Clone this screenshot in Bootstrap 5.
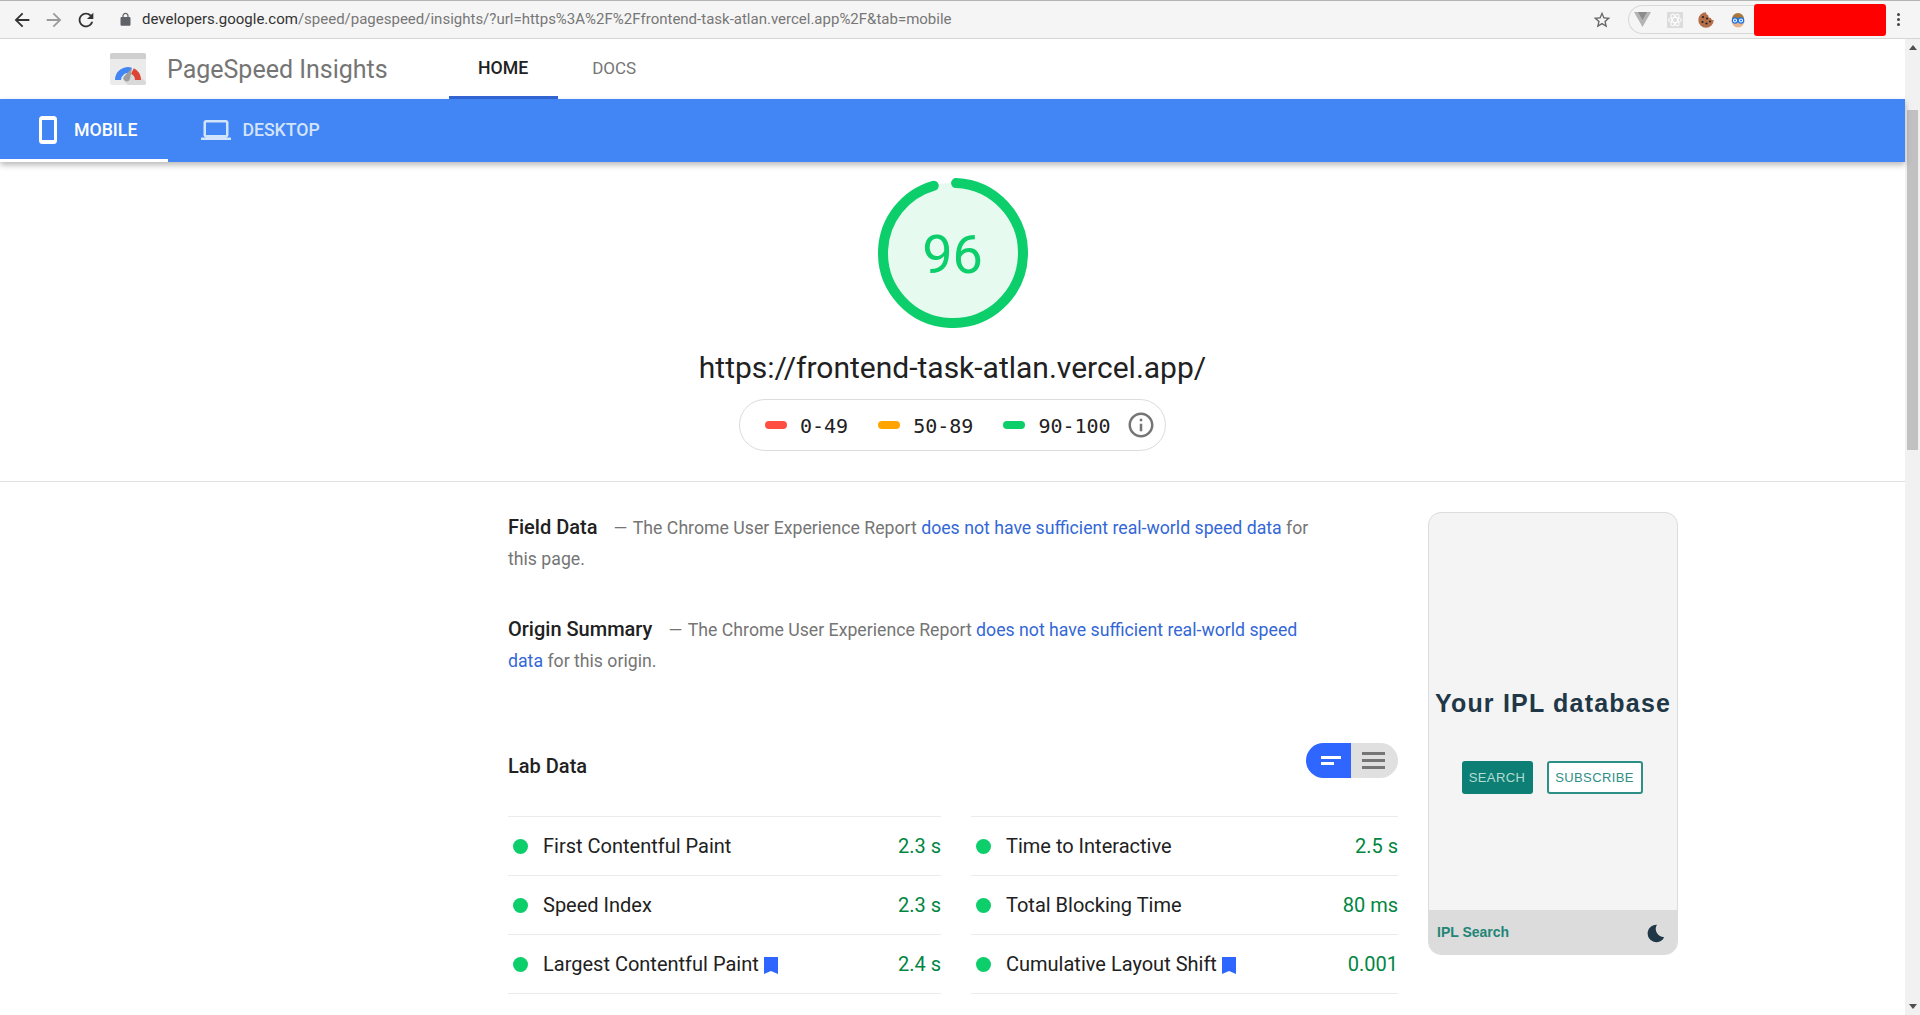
<!DOCTYPE html>
<html lang="en">
<head>
    <meta charset="UTF-8">
    <meta name="viewport" content="width=device-width, initial-scale=1.0">
    <title>PageSpeed Insights</title>
    <link href="https://cdn.jsdelivr.net/npm/bootstrap@5.3.1/dist/css/bootstrap.min.css" rel="stylesheet">
    <style>
        body { font-family: Roboto, "Liberation Sans", sans-serif; color: #212121; background: #fff; }

        /* browser toolbar */
        .tool-bar { height: 39px; background: #f5f5f5; border-top: 1px solid #b4b4b4; border-bottom: 1px solid #d6d6d6; padding-left: 11px; }
        .tool-btn { margin-right: 10px; }
        .url-lock { margin-left: 21px; margin-right: 9px; }
        .url-text { font-size: 15px; color: #777; }
        .url-text b { font-weight: 400; color: #333; }
        .ext-pill { height: 29px; width: 126px; margin-left: 16px; border: 1px solid #d8d8d8; border-right: 0; border-radius: 15px 0 0 15px; }
        .ext-slot { width: 32px; display: flex; justify-content: center; }
        .ext-slot:first-child { margin-left: -2px; }
        .red-box { width: 132px; height: 32px; background: #f00; border-radius: 3px; }
        .kebab { width: 24px; margin-right: 10px; }
        .kebab i { display: block; width: 3px; height: 3px; border-radius: 50%; background: #444; margin: 2px auto; }

        /* scrollbar */
        .fake-scroll { width: 15px; background: #f1f1f1; flex: none; }
        .scroll-thumb { height: 340px; margin: 60px 2px 0; background: #c1c1c1; }
        .arrow-up { border: 4px solid transparent; border-top: 0; border-bottom: 5px solid #505050; width: 0; margin: 6px auto 0; }
        .arrow-down { border: 4px solid transparent; border-bottom: 0; border-top: 5px solid #505050; width: 0; margin: auto auto 6px; }

        /* site header */
        .site-head { height: 60px; padding-left: 110px; }
        .logo-box { margin-right: 21px; }
        .site-title { font-size: 25px; color: #757575; width: 282px; padding-top: 1px; }
        .site-head .nav-link { height: 60px; padding: 2px 30px 0; display: flex; align-items: center; font-size: 17px; color: #757575; border-bottom: 3px solid transparent; }
        .site-head .nav-link.active { padding: 2px 30px 0 29px; font-size: 17.7px; color: #212121; font-weight: 500; border-bottom-color: #3367d6; }
        .site-head .nav-item + .nav-item { margin-left: 4px; }
        .tab-strip { height: 63px; background: #4285f4; box-shadow: 0 3px 6px rgba(0,0,0,.28); position: relative; }
        .tab-strip .nav-link { height: 63px; display: flex; align-items: center; font-size: 17.7px; font-weight: 500; color: #fff; border-bottom: 3px solid transparent; }
        .tab-strip .nav-link.active { padding: 2px 31px 0 39px; gap: 17px; border-bottom-color: #fff; }
        .tab-strip .nav-link.other { padding: 2px 0 0 33px; gap: 11px; color: #d2e3fc; }

        /* score */
        .score-area { padding-top: 16px; height: 320px; border-bottom: 1px solid #e0e0e0; }
        .gauge-wrap { display: grid; width: 150px; height: 150px; }
        .gauge-wrap > * { grid-area: 1 / 1; }
        .gauge-num { font-size: 54px; color: #0cce6b; line-height: 154px; text-align: center; }
        .page-url { font-size: 30px; line-height: 36px; margin-top: 22px; color: #212121; }
        .legend-pill { height: 52px; width: 427px; margin-top: 13px; border: 1px solid #dadce0; border-radius: 26px; padding-left: 25px; font-family: "DejaVu Sans Mono", monospace; font-size: 20px; color: #212121; }
        .legend-bar { width: 22px; height: 8px; border-radius: 4px; margin-right: 13px; }
        .legend-txt { margin-right: 30px; padding-top: 2px; }
        .legend-last { margin-right: 15px; padding-top: 2px; }

        /* report */
        .report-area { padding-left: 508px; padding-top: 30px; }
        .report-col { width: 890px; }
        .note-txt { width: 815px; font-size: 17.7px; line-height: 31px; color: #757575; margin-bottom: 39px; }
        .note-txt strong { font-size: 20px; font-weight: 500; color: #212121; margin-right: 16px; }
        .note-dash { margin-right: 1.5px; }
        .note-txt a { color: #3367d6; text-decoration: none; }
        .lab-head { height: 35px; margin-top: 66px; margin-bottom: 38px; }
        .lab-title { font-size: 20px; font-weight: 500; padding-top: 8px; }
        .view-toggle { width: 92px; height: 35px; border-radius: 18px; overflow: hidden; }
        .view-a { width: 45px; background: #2f66ff; padding-left: 15px; }
        .view-a i { display: block; height: 3px; background: #fff; margin-bottom: 3px; }
        .view-b { width: 47px; background: #e0e0e0; padding-left: 11px; }
        .view-b i { display: block; height: 3px; width: 23px; background: #757575; margin: 2px 0; }
        .metric-grid { display: grid; grid-template-columns: 433px 427px; column-gap: 30px; }
        .metric-line { height: 59px; padding-left: 5px; border-bottom: 1px solid #ebebeb; font-size: 20px; }
        .metric-line.first-line { height: 60px; border-top: 1px solid #ebebeb; }
        .metric-dot { width: 15px; height: 15px; border-radius: 50%; background: #0cce6b; margin-right: 15px; }
        .metric-val { margin-left: auto; color: #018642; }
        .mark-icon { margin-left: 5px; margin-top: 2px; }

        /* thumbnail */
        .thumb-box { width: 250px; height: 443px; margin-left: 30px; border: 1px solid #dadce0; border-radius: 13px; background: #f3f4f3; overflow: hidden; font-family: "Liberation Sans", Arial, sans-serif; }
        .thumb-hero { padding-top: 165px; height: 397px; }
        .thumb-title { font-size: 25px; font-weight: 700; letter-spacing: 1.2px; color: #1f3747; line-height: 50px; white-space: nowrap; }
        .thumb-btn { height: 33px; font-size: 13px; letter-spacing: .4px; border-radius: 3px; }
        .thumb-row { margin-top: 33px; padding-right: 2px; }
        .thumb-search { width: 71px; background: #0d7f74; color: #b5dcd5; }
        .thumb-sub { width: 96px; margin-left: 14px; border: 2px solid #2d8f85; color: #2d8f85; background: #fff; }
        .thumb-foot { height: 45px; background: #dcdcdc; padding: 0 10px 0 8px; }
        .thumb-name { font-size: 14px; font-weight: 700; color: #218577; }
    </style>
</head>
<body class="overflow-hidden">
    <div class="d-flex flex-column vh-100">
        <div class="tool-bar d-flex align-items-center flex-none">
            <svg class="tool-btn" width="22" height="22" viewBox="0 0 24 24" fill="#333"><path d="M20 11H7.83l5.59-5.59L12 4l-8 8 8 8 1.41-1.41L7.83 13H20v-2z"/></svg>
            <svg class="tool-btn" width="22" height="22" viewBox="0 0 24 24" fill="#9a9a9a"><path d="M12 4l-1.41 1.41L16.17 11H4v2h12.17l-5.58 5.59L12 20l8-8z"/></svg>
            <svg width="22" height="22" viewBox="0 0 24 24" fill="#333"><path d="M17.65 6.35A7.958 7.958 0 0 0 12 4c-4.42 0-7.99 3.58-7.99 8s3.57 8 7.99 8c3.73 0 6.84-2.55 7.73-6h-2.08A5.99 5.99 0 0 1 12 18c-3.31 0-6-2.69-6-6s2.69-6 6-6c1.66 0 3.14.69 4.22 1.78L13 11h7V4l-2.35 2.35z"/></svg>
            <svg class="url-lock" width="15" height="15" viewBox="0 0 24 24" fill="#5f6368"><path d="M18 8h-1V6c0-2.76-2.24-5-5-5S7 3.24 7 6v2H6c-1.1 0-2 .9-2 2v10c0 1.1.9 2 2 2h12c1.1 0 2-.9 2-2V10c0-1.1-.9-2-2-2zM9 6c0-1.66 1.34-3 3-3s3 1.34 3 3v2H9V6z"/></svg>
            <div class="url-text"><b>developers.google.com</b>/speed/pagespeed/insights/?url=https%3A%2F%2Ffrontend-task-atlan.vercel.app%2F&amp;tab=mobile</div>
            <svg class="ms-auto" width="20" height="20" viewBox="0 0 24 24" fill="#666"><path d="M22 9.24l-7.19-.62L12 2 9.19 8.63 2 9.24l5.46 4.73L5.82 21 12 17.27 18.18 21l-1.63-7.03L22 9.24zM12 15.4l-3.76 2.27 1-4.28-3.32-2.88 4.38-.38L12 6.1l1.71 4.04 4.38.38-3.32 2.88 1 4.28L12 15.4z"/></svg>
            <div class="ext-pill d-flex align-items-center">
                <div class="ext-slot"><svg width="17" height="15" viewBox="0 0 17 15"><path d="M0 0h17L8.5 15z" fill="#b4b4b4"/><path d="M4 0h9L8.5 8z" fill="#8c8c8c"/></svg></div>
                <div class="ext-slot"><svg width="16" height="16" viewBox="0 0 16 16"><rect width="16" height="16" fill="#dcdcdc"/><g fill="none" stroke="#fff"><ellipse cx="8" cy="8" rx="6.5" ry="2.5"/><ellipse cx="8" cy="8" rx="6.5" ry="2.5" transform="rotate(60 8 8)"/><ellipse cx="8" cy="8" rx="6.5" ry="2.5" transform="rotate(120 8 8)"/></g></svg></div>
                <div class="ext-slot"><svg width="16" height="16" viewBox="0 0 16 16"><path d="M8 .3a7.7 7.7 0 1 0 7.7 7.7c-1.5.3-2.6-.5-2.8-2-1.7.1-2.8-1-2.7-2.7C8.9 3 8 1.8 8 .3z" fill="#b5704a"/><g fill="#222"><circle cx="5" cy="5" r="1.100"/><circle cx="9" cy="6.500" r="1"/><circle cx="4.500" cy="10" r="1.100"/><circle cx="8.500" cy="11.500" r="1.100"/><circle cx="12" cy="9.500" r="1"/></g></svg></div>
                <div class="ext-slot"><svg width="16" height="16" viewBox="0 0 16 16"><circle cx="8" cy="9" r="6.500" fill="#e8b48e"/><path d="M2 7a6 6 0 0 1 12 0z" fill="#a8763e"/><circle cx="5" cy="8.500" r="2.600" fill="#fff" stroke="#1a73e8" stroke-width="1.200"/><circle cx="11" cy="8.500" r="2.600" fill="#fff" stroke="#1a73e8" stroke-width="1.200"/><circle cx="5" cy="8.500" r="1" fill="#1a73e8"/><circle cx="11" cy="8.500" r="1" fill="#1a73e8"/></svg></div>
            </div>
            <div class="red-box"></div>
            <div class="kebab"><i></i><i></i><i></i></div>
        </div>

        <div class="d-flex flex-grow-1 overflow-hidden">
            <div class="flex-grow-1">
                <div class="site-head d-flex align-items-center">
                    <svg class="logo-box" width="36" height="32" viewBox="0 0 36 32">
                        <rect width="36" height="32" rx="2" fill="#ebebeb"/>
                        <path d="M0 6V2a2 2 0 0 1 2-2h32a2 2 0 0 1 2 2v4z" fill="#cfcfcf"/>
                        <path d="M14 28L23 16l13 13v1a2 2 0 0 1-2 2H18z" fill="#d9d9d9"/>
                        <path d="M8 27a10 10 0 0 1 13-9.500" fill="none" stroke="#4285f4" stroke-width="6"/>
                        <path d="M22.500 18a10 10 0 0 1 5.500 9" fill="none" stroke="#db4437" stroke-width="6"/>
                        <path d="M13.500 24L22 15l-2 11a3.300 3.300 0 0 1-6.500-2z" fill="#9e9e9e"/>
                    </svg>
                    <div class="site-title">PageSpeed Insights</div>
                    <ul class="nav">
                        <li class="nav-item"><a class="nav-link active" href="#">HOME</a></li>
                        <li class="nav-item"><a class="nav-link" href="#">DOCS</a></li>
                    </ul>
                </div>
                <ul class="nav tab-strip">
                    <li class="nav-item"><a class="nav-link active" href="#">
                        <svg width="18" height="28" viewBox="0 0 18 28"><rect x="1.500" y="1.500" width="15" height="25" rx="2" fill="none" stroke="#fff" stroke-width="3"/><rect x="1" y="1" width="16" height="3" fill="#fff"/><rect x="1" y="24" width="16" height="3" fill="#fff"/></svg>
                        MOBILE</a></li>
                    <li class="nav-item"><a class="nav-link other" href="#">
                        <svg width="30" height="30" viewBox="0 0 24 24" preserveAspectRatio="none" fill="#d2e3fc"><path d="M20 18c1.100 0 2-.9 2-2V6c0-1.100-.9-2-2-2H4c-1.100 0-2 .9-2 2v10c0 1.100.9 2 2 2H0v2h24v-2h-4zM4 6h16v10H4V6z"/></svg>
                        DESKTOP</a></li>
                </ul>

                <div class="score-area d-flex flex-column align-items-center">
                    <div class="gauge-wrap">
                        <svg width="150" height="150" viewBox="0 0 150 150">
                            <circle cx="75" cy="75" r="70" fill="#e7faf0"/>
                            <circle cx="75" cy="75" r="70" fill="none" stroke="#0cce6b" stroke-width="10" stroke-linecap="round" stroke-dasharray="416.500 440" transform="rotate(-87.500 75 75)"/>
                        </svg>
                        <div class="gauge-num">96</div>
                    </div>
                    <div class="page-url">https://frontend-task-atlan.vercel.app/</div>
                    <div class="legend-pill d-flex align-items-center">
                        <span class="legend-bar" style="background:#ff4e42"></span><span class="legend-txt">0-49</span>
                        <span class="legend-bar" style="background:#ffa400"></span><span class="legend-txt">50-89</span>
                        <span class="legend-bar" style="background:#0cce6b"></span><span class="legend-last">90-100</span>
                        <svg width="30" height="30" viewBox="0 0 24 24" fill="#757575"><path d="M11 7h2v2h-2zm0 4h2v6h-2zm1-9C6.480 2 2 6.480 2 12s4.480 10 10 10 10-4.480 10-10S17.520 2 12 2zm0 18c-4.410 0-8-3.590-8-8s3.590-8 8-8 8 3.590 8 8-3.590 8-8 8z"/></svg>
                    </div>
                </div>

                <div class="report-area d-flex align-items-start">
                    <div class="report-col">
                        <p class="note-txt"><strong>Field Data</strong><span class="note-dash">&mdash;</span> The Chrome User Experience Report <a href="#">does not have sufficient real-world speed data</a> for this page.</p>
                        <p class="note-txt"><strong>Origin Summary</strong><span class="note-dash">&mdash;</span> The Chrome User Experience Report <a href="#">does not have sufficient real-world speed data</a> for this origin.</p>
                        <div class="lab-head d-flex justify-content-between">
                            <div class="lab-title">Lab Data</div>
                            <div class="view-toggle d-flex">
                                <div class="view-a d-flex flex-column justify-content-center">
                                    <i style="width:20px"></i><i class="mb-0" style="width:13px"></i>
                                </div>
                                <div class="view-b d-flex flex-column justify-content-center">
                                    <i></i><i></i><i></i>
                                </div>
                            </div>
                        </div>
                        <div class="metric-grid">
                            <div class="metric-line first-line d-flex align-items-center"><span class="metric-dot"></span>First Contentful Paint<span class="metric-val">2.3 s</span></div>
                            <div class="metric-line first-line d-flex align-items-center"><span class="metric-dot"></span>Time to Interactive<span class="metric-val">2.5 s</span></div>
                            <div class="metric-line d-flex align-items-center"><span class="metric-dot"></span>Speed Index<span class="metric-val">2.3 s</span></div>
                            <div class="metric-line d-flex align-items-center"><span class="metric-dot"></span>Total Blocking Time<span class="metric-val">80 ms</span></div>
                            <div class="metric-line d-flex align-items-center"><span class="metric-dot"></span>Largest Contentful Paint<svg class="mark-icon" width="14" height="17" viewBox="0 0 14 17" fill="#2f66ff"><path d="M0 0h14v17l-7-3-7 3z"/></svg><span class="metric-val">2.4 s</span></div>
                            <div class="metric-line d-flex align-items-center"><span class="metric-dot"></span>Cumulative Layout Shift<svg class="mark-icon" width="14" height="17" viewBox="0 0 14 17" fill="#2f66ff"><path d="M0 0h14v17l-7-3-7 3z"/></svg><span class="metric-val">0.001</span></div>
                        </div>
                    </div>
                    <div class="thumb-box">
                        <div class="thumb-hero text-center">
                            <div class="thumb-title">Your IPL database</div>
                            <div class="thumb-row d-flex justify-content-center">
                                <div class="thumb-btn thumb-search d-flex align-items-center justify-content-center">SEARCH</div>
                                <div class="thumb-btn thumb-sub d-flex align-items-center justify-content-center">SUBSCRIBE</div>
                            </div>
                        </div>
                        <div class="thumb-foot d-flex align-items-center justify-content-between">
                            <span class="thumb-name">IPL Search</span>
                            <svg width="22" height="22" viewBox="0 0 24 24" fill="#1f3747"><path d="M13 3a9.500 9.500 0 1 0 8 13.500A9 9 0 0 1 13 3z"/></svg>
                        </div>
                    </div>
                </div>
            </div>
            <div class="fake-scroll d-flex flex-column">
                <div class="arrow-up"></div>
                <div class="scroll-thumb"></div>
                <div class="arrow-down"></div>
            </div>
        </div>
    </div>
    <script src="https://cdn.jsdelivr.net/npm/bootstrap@5.3.1/dist/js/bootstrap.bundle.min.js"></script>
</body>
</html>
